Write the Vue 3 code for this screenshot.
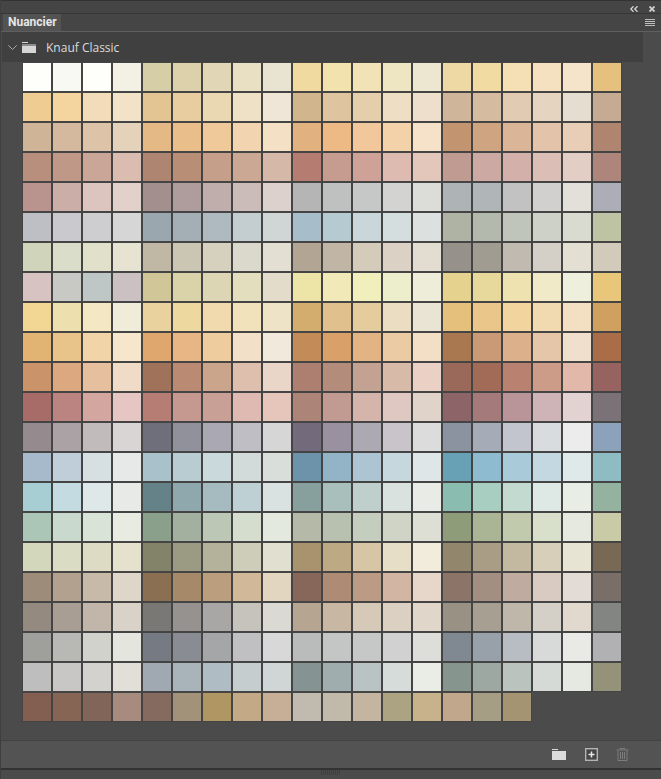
<script setup>
const rows = [
  "#FEFFFA #F9F9F3 #FEFFFA #F3F0E4 #D6CEA6 #DDD1AC #E1D6B6 #E9E0C4 #E9E3D2 #F0DA9F #F1E2AE #F1E3B5 #EEE5C2 #EDE6D0 #EED8A3 #F2DBA2 #F5DFB4 #F5E1C0 #F5E4C9 #E6C07F",
  "#EFCC92 #F4D59F #F2DCB9 #F2E2C8 #E2C592 #E8CDA0 #EAD8B3 #EFE1C5 #EFE6D7 #D0B58D #DEC5A0 #E4CEAC #EEDFC4 #EDDFCB #CFB69B #D5BBA0 #E2CBB3 #E4D4C0 #E4DDD0 #C5AB91",
  "#D0B498 #D4B99E #DDC4A9 #E4D2BA #E5B985 #E9BE8B #EFC999 #F3D4B0 #F3E0C5 #E1B27F #EDBA86 #F2C79B #F4D2A9 #F5E2C8 #C39470 #CFA481 #DAB597 #E3C4AB #E8CDB7 #AF8570",
  "#B88F7D #BF9887 #C9A697 #DABDB0 #AE8570 #B88E77 #C59F8A #CBA893 #D5B8A8 #B57D71 #C69C91 #CFA297 #DDBBB1 #E3C7BB #BF9B92 #CCA9A2 #D3B0A9 #DBBEB6 #E2CEC4 #AD857B",
  "#B9948E #CBAEA8 #DCC5BF #E1D1CA #A28F8E #AF9C9D #BFAEAB #CCBCB9 #DDD1CE #B5B5B6 #BFC0C0 #C6C7C7 #D3D3D1 #DCDDD9 #AEB3B5 #B0B5B7 #C2C2C3 #D1D0CE #E3DFD9 #ABADB7",
  "#BEBFC5 #C9C9CE #CECED0 #D6D6D6 #9BA7AE #A3AFB5 #AEBAC0 #C4CDD0 #D0D6D6 #A7BDC9 #B6CBD1 #CAD7DA #D5DEDF #DCE0DF #AEB3A4 #B3B9AC #C0C5BB #CED1C8 #D9DBD0 #BEC3A3",
  "#D0D4BA #DADDC9 #E0E0CB #E6E3D2 #C0B8A5 #CBC6B3 #D6D0BE #DBD8CC #E3DFD2 #B3A594 #C1B5A5 #D5CBBA #DBD2C5 #E3DCD0 #96918A #A09C91 #C1BAB0 #D4D0C8 #E3DFD2 #D2CBBB",
  "#D6C3C2 #C8C9C4 #BFC6C6 #CBC1C2 #D0C698 #DAD2A8 #DCD6B4 #E3DEBE #E4DCCB #EDE5A8 #F1EAB8 #F1EFBC #EDEECB #EEEDDA #E5D28F #E7D89C #EDE2B0 #F0EAC9 #EFEFDD #E9C77A",
  "#F1D793 #EEE0AE #F3E8C3 #EFECDA #E9D29D #EDD8A0 #F1DBAE #F1E2BC #EEE3C6 #D2AD6E #E0C08C #E5CC9D #EADDC2 #EAE4D4 #E4C07C #EBC68A #F2D49E #F1D9B0 #F3E0C3 #CFA060",
  "#E2B474 #E9C48A #F1D4A7 #F5E6CC #DFA66E #E8B585 #EECC9E #F2E0C8 #F1EADC #C28B58 #D9A06A #E2B383 #EBCBA3 #F2DFC6 #A97850 #CA9976 #DBB08B #E6C6A9 #F1DFCE #A96D47",
  "#CB9369 #DCA880 #E5BF9E #F0DBC6 #A07259 #BB8A72 #CBA48C #DEBFAE #EAD6C8 #AC7F70 #B38C7C #C4A292 #D8BAA8 #EAD0C5 #9A6959 #A16B58 #B98270 #CC9C89 #E1B8A9 #966361",
  "#A76C67 #BC8480 #D4A6A0 #E6C6C2 #B57D74 #C59890 #C9A095 #DFBAB2 #E6C6BA #AC8578 #C19A92 #D4B4AB #DEC8C1 #DFD3CA #8D6468 #A47A7A #B99498 #CEB4B6 #E3D2D2 #7A7276",
  "#958B8E #ABA2A5 #C2BBBB #DAD5D5 #6E6F7B #91919C #AAA8B2 #C0BEC5 #D7D6D6 #736B7B #9991A0 #ADA9B2 #C8C4CA #DDDCDD #8B92A0 #A5ABB7 #C2C5CD #D9DCDF #ECECEC #8CA2BA",
  "#A7BACB #BFCED8 #D6DFE1 #E5E9E7 #A9C1CA #B8CCD2 #CAD9DB #D3DBDA #D9DEDA #6D93AA #93B3C6 #ADC5D2 #C6D8DE #DFE6E7 #68A0B6 #8FBBD1 #A9CAD9 #C4D8E1 #E0E9E9 #8FBCC3",
  "#A7CFD3 #C4DCE1 #DFE8E8 #E7EBE6 #658289 #8FA8AD #A5BBC0 #BED0D3 #D9E2E0 #87A09E #A9BFBC #BFD0CC #D9E2DE #E9EBE6 #8ABDB0 #A8CEC1 #C3DAD1 #DEE8E4 #E8EEE6 #93B2A0",
  "#ABC6B6 #C9D9CE #D9E3D8 #E8EBE1 #8AA08B #A3B09F #BDC7B5 #D5DDCF #E4E9DF #B4B9A8 #B8C0AF #C5CDBF #D0D4C7 #DDDED4 #8F9C7A #A9B595 #C2CAAE #D8DFCA #E6E9DF #C8CBA6",
  "#D3D7BC #DADCC4 #DDDBC4 #E4E1CD #83836A #9A9B82 #B4B29B #CECDB9 #E1E0D0 #A9926E #BDAA85 #D6C6A5 #E6DEC6 #F1ECDC #92866C #A99E85 #C3B9A1 #D8CFBB #E7E4D3 #776953",
  "#9C8C79 #B1A18E #C8BAA8 #DED6C9 #8A6F53 #A68968 #BA9E7E #D0B899 #E3D6C0 #87675A #AE8B75 #BC9B85 #D2B5A3 #E6D7CA #8C7468 #A38E82 #BFABA0 #DACBC2 #E3DBD5 #7A6F68",
  "#948A80 #A89E93 #C1B6A9 #D9D2C8 #7A7875 #959290 #A9A7A5 #C6C3BD #DBD9D3 #B6A591 #C8B7A3 #D7C9B8 #DCD0C2 #E1D6CA #9A9185 #A69F92 #BFB7A9 #D5D0C7 #E1D9CE #838580",
  "#9FA09B #B8B8B4 #D2D2CD #E5E5E0 #767A83 #898C92 #A5A6A8 #C0C0C2 #D8D8D8 #BABCBC #C4C6C6 #C6C7C7 #D1D1D1 #DDDDD9 #808892 #98A0AA #B8BDC3 #D8DADA #E9EAE6 #B1B1B3",
  "#BEBEBF #C8C7C6 #D4D2CF #E2DFD8 #A0A9B1 #A8B3BA #B0BCC3 #C5CDCE #D0D6D5 #859393 #A0ADAF #B9C3C4 #D6DCDA #EAEDE6 #86958E #9DA8A2 #BAC3BE #D6DAD6 #E6E8E2 #949278",
  "#835F52 #866555 #806558 #A68B7E #856A60 #A2927A #B09663 #C3A986 #C6AF96 #C0BBAE #C1B9AA #C3B5A0 #ABA382 #C8B28B #C1A88C #A59E85 #A49472",
];
const swatches = rows.join(" ").split(" ");
</script>

<template>
  <div class="panel">
    <div class="topbar">
      <svg width="8" height="6" viewBox="0 0 8 6">
        <path d="M3.5 0.3 L0.8 3 L3.5 5.7 M7.5 0.3 L4.8 3 L7.5 5.7" fill="none" stroke="#d8d8d8" stroke-width="1.3" />
      </svg>
      <svg width="6" height="6" viewBox="0 0 6 6">
        <path d="M0.5 0.5 L5.5 5.5 M5.5 0.5 L0.5 5.5" fill="none" stroke="#d0d0d0" stroke-width="1.8" />
      </svg>
    </div>
    <div class="tabbar">
      <div class="tab">Nuancier</div>
      <svg width="10" height="7" viewBox="0 0 10 7">
        <path d="M0 0.5 H10 M0 2.5 H10 M0 4.5 H10 M0 6.5 H10" stroke="#bdbdbd" stroke-width="1" />
      </svg>
    </div>
    <div class="content">
      <div class="group">
        <svg class="chevron" width="9" height="5" viewBox="0 0 9 5">
          <path d="M0.3 0.3 L4.5 4.5 L8.7 0.3" fill="none" stroke="#a8a8a8" stroke-width="1" />
        </svg>
        <svg class="folder" width="14" height="11" viewBox="0 0 14 11">
          <path d="M0 0 H6 V1 H0 Z M0 2 H14 V11 H0 Z" fill="#d6d6d6" />
          <path d="M0 3 H14" stroke="#434343" stroke-width="1" />
        </svg>
        <span class="group-name">Knauf Classic</span>
      </div>
      <div class="grid">
        <div v-for="(color, i) in swatches" :key="i" class="swatch" :style="{ background: color }"></div>
      </div>
    </div>
    <div class="footer">
      <svg class="new-group" width="14" height="11" viewBox="0 0 14 11">
        <path d="M0 0 H6 V1 H0 Z M0 2 H14 V11 H0 Z" fill="#dcdcdc" />
      </svg>
      <svg width="13" height="13" viewBox="0 0 13 13">
        <rect x="0.7" y="0.7" width="11.6" height="11.6" fill="#454545" stroke="#b4b4b4" stroke-width="1.4" />
        <path d="M6.5 3.5 V9.5 M3.5 6.5 H9.5" stroke="#e8e8e8" stroke-width="1.5" />
      </svg>
      <svg width="13" height="13" viewBox="0 0 13 13">
        <path d="M4 1.5 V0.5 H9 V1.5 M0.5 2 H12.5 M2 2.5 V12.5 H11 V2.5 M4.5 4 V11 M6.5 4 V11 M8.5 4 V11" fill="none" stroke="#7d7d7d" stroke-width="1" />
      </svg>
    </div>
    <div class="grip"><span></span></div>
  </div>
</template>

<style scoped>
.panel {
  width: 661px;
  height: 779px;
  box-sizing: border-box;
  display: flex;
  flex-direction: column;
  background: #4b4b4b;
  border-left: 1px solid #3f3f3f;
  font-family: "Open Sans", "Noto Sans", sans-serif;
  overflow: hidden;
}
.topbar {
  height: 14px;
  flex: none;
  display: flex;
  align-items: center;
  justify-content: flex-end;
  gap: 11px;
  padding: 3px 6px 0 0;
  box-sizing: border-box;
  background: #454545;
  border-top: 1px solid #333333;
  border-bottom: 1px solid #363636;
}
.tabbar {
  height: 17px;
  flex: none;
  display: flex;
  justify-content: space-between;
  align-items: center;
  padding: 0 6px 0 2px;
  background: #454545;
  border-bottom: 1px solid #5f5f5f;
}
.tab {
  height: 100%;
  width: 58px;
  box-sizing: border-box;
  padding-left: 5px;
  background: #535353;
  color: #e6e6e6;
  font-family: Roboto, "Liberation Sans", sans-serif;
  font-size: 12px;
  font-weight: 700;
  line-height: 17px;
}
.content {
  flex: 1;
  min-height: 0;
  padding-left: 1px;
}
.group {
  width: 641px;
  height: 30px;
  display: flex;
  align-items: center;
  background: #404040;
}
.chevron {
  margin-left: 6px;
}
.folder {
  margin-left: 5px;
}
.group-name {
  margin-left: 10px;
  color: #dcdcdc;
  font-size: 12px;
}
.grid {
  display: grid;
  grid-template-columns: repeat(20, 28px);
  grid-auto-rows: 28px;
  gap: 2px;
  padding: 1px 0 0 21px;
}
.swatch {
  box-shadow: 0 0 0 1px #444444;
}
.footer {
  height: 28px;
  flex: none;
  display: flex;
  align-items: center;
  justify-content: flex-end;
  gap: 18px;
  padding-right: 32px;
  box-sizing: border-box;
  background: #535353;
  border-top: 1px solid #424242;
}
.new-group {
  margin-right: 1px;
}
.grip {
  height: 9px;
  flex: none;
  display: flex;
  justify-content: center;
  background: #4b4b4b;
  border-top: 2px solid #333333;
}
.grip span {
  width: 20px;
  height: 5px;
  background: repeating-linear-gradient(90deg, #3f3f3f 0 1px, transparent 1px 2px);
}
</style>

<style>
html,
body {
  margin: 0;
  background: #4b4b4b;
}
</style>
